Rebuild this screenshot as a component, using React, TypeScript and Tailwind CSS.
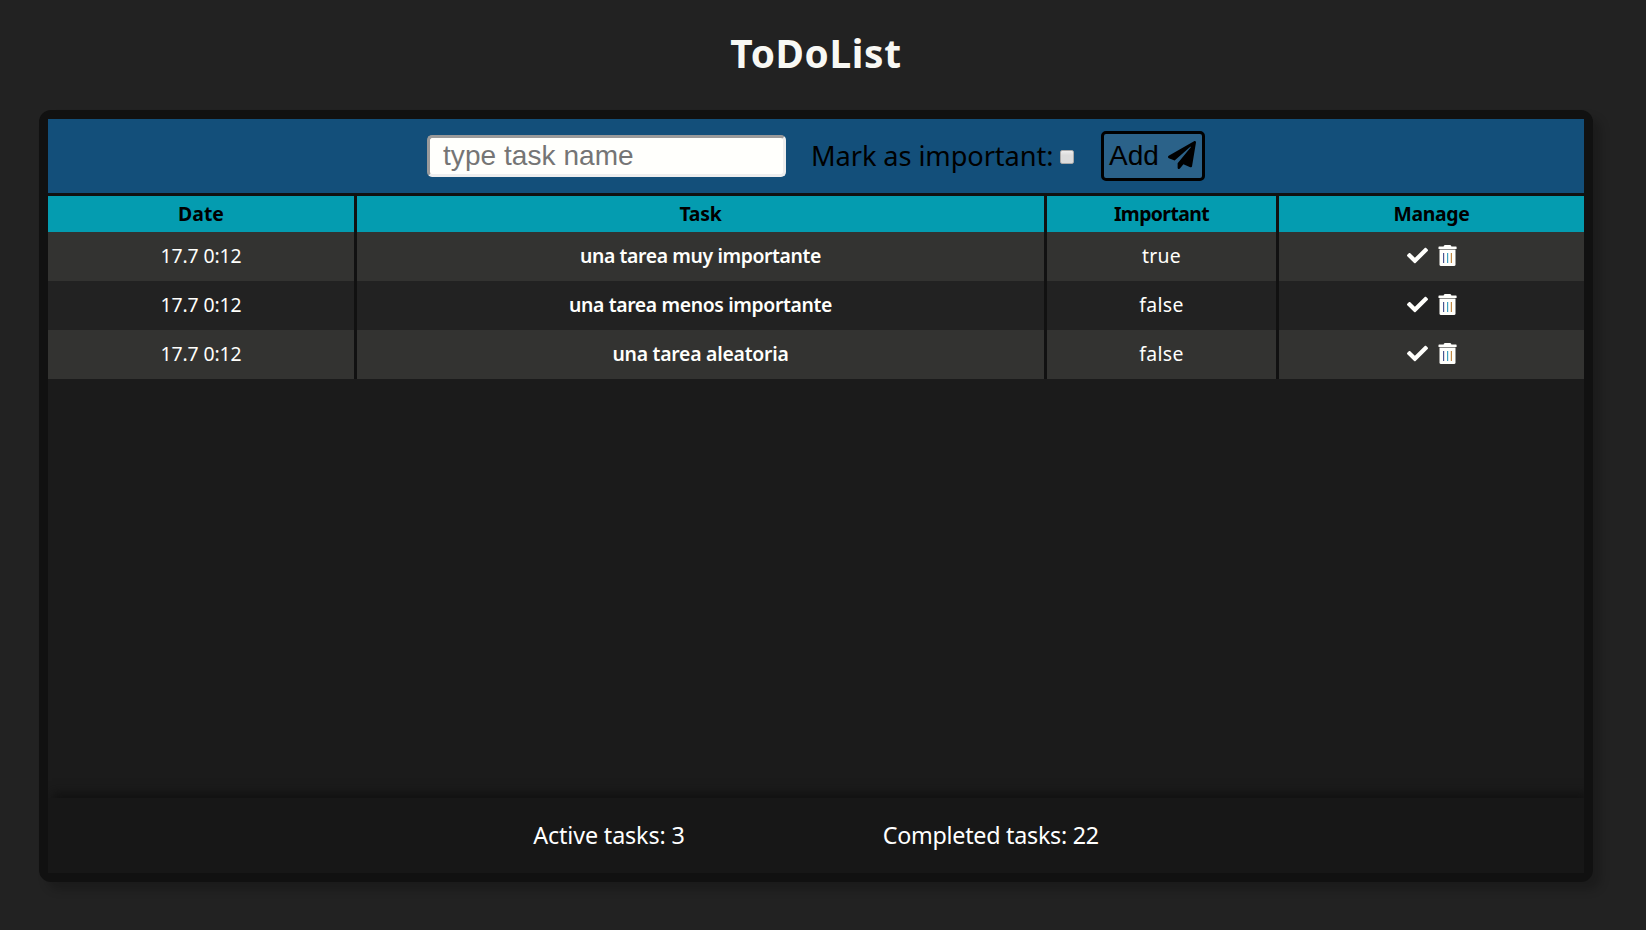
import { FaCheck, FaPaperPlane } from 'react-icons/fa';

type Task = { date: string; name: string; important: boolean; tracking: string };

const tasks: Task[] = [
  { date: '17.7 0:12', name: 'una tarea muy importante', important: true, tracking: 'tracking-[-0.38px]' },
  { date: '17.7 0:12', name: 'una tarea menos importante', important: false, tracking: 'tracking-[-0.36px]' },
  { date: '17.7 0:12', name: 'una tarea aleatoria', important: false, tracking: 'tracking-[-0.24px]' },
];

const columns = 'grid grid-cols-[306px_687px_229px_305px] gap-x-[3px]';

function TrashIcon() {
  return (
    <svg viewBox="0 0 19 21" className="h-[21px] w-[19px]">
      <path fill="#fffffc" d="M6 .6Q6.300 0 7 0h5q.7 0 1 .6l.4.9h4.600q.6 0 .6.6V4H.5V2.100q0-.6.6-.6h4.500z" />
      <path fill="#8a8a88" d="M1.500 4h16v1h-16z" />
      <path fill="#fffffc" d="M1.500 5h16v14.500q0 1.500-1.500 1.500H3q-1.500 0-1.500-1.500z" />
      <path fill="#4a5590" d="M5 8h1.200v10H5z" />
      <path fill="#3f9fc0" d="M9 8h1.200v10H9z" />
      <path fill="#c08a45" d="M12.800 8H14v10h-1.200z" />
    </svg>
  );
}

function TaskForm() {
  return (
    <form className="flex h-[74px] items-center bg-[#134f7a] pl-[379px] text-black" onSubmit={(e) => e.preventDefault()}>
      <input
        type="text"
        placeholder="type task name"
        className="h-[42px] w-[359px] rounded-[5px] border-[3px] border-t-[#9a9a9a] border-r-[#eeeeee] border-b-[#eeeeee] border-l-[#9a9a9a] bg-[#fffffc] px-[13px] font-['Liberation_Sans',Arial,sans-serif] text-[28px] leading-[32px] tracking-[0.06px] outline-none placeholder:text-[#757575]"
      />
      <label className="ml-[25px] flex items-center">
        <span className="w-[249px] text-[27.2px] leading-[38px] tracking-[-0.08px] whitespace-nowrap">Mark as important:</span>
        <input
          type="checkbox"
          className="mt-[2px] size-[14px] appearance-none rounded-[2px] border border-[#a9a9a9] bg-linear-to-b from-[#eeeeee] to-[#dcdcdc] to-35%"
        />
      </label>
      <button
        type="submit"
        className="ml-[27px] flex h-[50px] w-[104px] items-center rounded-[5px] border-[3px] border-black bg-[#2b6289] pl-[5px] font-['Liberation_Sans',Arial,sans-serif] text-[28px] leading-[32px]"
      >
        <span className="w-[58.5px] text-left">Add</span>
        <FaPaperPlane className="mb-[2px] size-[28px] shrink-0" />
      </button>
    </form>
  );
}

function TaskTable() {
  return (
    <div className="text-center text-[19.4px]">
      <div className={`${columns} mt-[3px] h-[36px] font-bold leading-[36px] text-black *:bg-[#049cb0]`}>
        <div>Date</div>
        <div className="tracking-[-0.2px]">Task</div>
        <div className="tracking-[-0.6px]">Important</div>
        <div className="tracking-[-0.35px]">Manage</div>
      </div>
      {tasks.map((task, i) => (
        <div
          key={task.name}
          className={`${columns} h-[49px] leading-[47px] text-[#fffffc] ${i % 2 ? '*:bg-[#222222]' : '*:bg-[#333331]'}`}
        >
          <div className="tracking-[-0.1px]">{task.date}</div>
          <div className={`font-semibold ${task.tracking}`}>{task.name}</div>
          <div className="tracking-[0.3px]">{String(task.important)}</div>
          <div className="flex items-center justify-center gap-[10px] pb-[2px]">
            <FaCheck className="size-[21px]" />
            <TrashIcon />
          </div>
        </div>
      ))}
    </div>
  );
}

export default function App() {
  return (
    <div className="h-[930px] w-full overflow-hidden bg-[#222222] pl-[39px] font-['Noto_Sans',sans-serif]">
      <div className="w-[1554px]">
        <h1 className="mb-[4px] h-[106px] text-center text-[38.8px] leading-[106px] font-bold tracking-[0.65px] text-[#f8f8f4]">ToDoList</h1>
        <main className="h-[772px] rounded-[12px] border-[9px] border-[#111111] bg-[#111111] shadow-[8px_8px_10px_rgba(0,0,0,0.2)]">
          <div className="flex h-[754px] flex-col overflow-hidden">
            <TaskForm />
            <TaskTable />
            <div className="flex-1 bg-[#1b1b1b]" />
            <footer className="flex h-[75px] items-center justify-center gap-[198px] bg-[#171717] pb-[2px] text-[23.3px] leading-[32px] text-white shadow-[4px_-5px_10px_#111111]">
              <span className="tracking-[-0.12px]">Active tasks: 3</span>
              <span className="tracking-[-0.27px]">Completed tasks: 22</span>
            </footer>
          </div>
        </main>
      </div>
    </div>
  );
}
